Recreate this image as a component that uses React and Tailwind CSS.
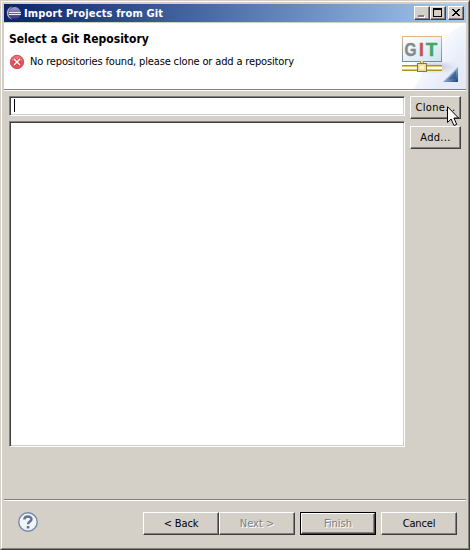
import React from "react";

const raised =
  "border border-t-white border-l-white border-r-[#404040] border-b-[#404040] shadow-[inset_-1px_-1px_0_#808080] bg-[#d4d0c8]";
const sunken =
  "border border-t-[#808080] border-l-[#808080] border-r-white border-b-white bg-white shadow-[inset_1px_1px_0_#404040,inset_-1px_-1px_0_#d4d0c8]";

function EclipseIcon() {
  return (
    <svg width="16" height="16" viewBox="0 0 16 16" className="shrink-0">
      <defs>
        <linearGradient id="orb" x1="0" y1="0" x2="0" y2="1">
          <stop offset="0" stopColor="#a9a4cf" />
          <stop offset=".45" stopColor="#6e68a6" />
          <stop offset="1" stopColor="#39366f" />
        </linearGradient>
      </defs>
      <path d="M6.500 1.500C3 2 .8 5 .8 8s2.200 6 5.700 6.500C3.500 12.500 2.500 10 2.500 8s1-4.500 4-6.500Z" fill="#b8a6b8" />
      <circle cx="8.700" cy="8" r="6" fill="url(#orb)" />
      <path d="M3 7.500h12M3 9.500h12" stroke="#e9e8f6" strokeWidth="1" />
    </svg>
  );
}

function ErrorIcon() {
  return (
    <svg width="16" height="16" viewBox="0 0 16 16" className="shrink-0">
      <circle cx="8" cy="8" r="6.700" fill="#e4505a" stroke="#d0525c" />
      <path d="M2.500 7C3 3 6 2 8 2s5 1 5.500 5Z" fill="#ef8287" opacity=".7" />
      <path d="M5 5l6 6M11 5l-6 6" stroke="#c23c48" strokeWidth="3" />
      <path d="M5 5l6 6M11 5l-6 6" stroke="#fff" strokeWidth="1.500" />
    </svg>
  );
}

function GitBanner() {
  return (
    <svg width="76" height="66" viewBox="390 23 76 66" className="shrink-0">
      <defs>
        <linearGradient id="sky" x1="0" y1="0" x2="1" y2="1">
          <stop offset="0.250" stopColor="#fff" />
          <stop offset="1" stopColor="#d8e1f6" />
        </linearGradient>
        <linearGradient id="frame" x1="0" y1="0" x2="0" y2="1">
          <stop offset="0" stopColor="#dfb783" />
          <stop offset="1" stopColor="#6d8cac" />
        </linearGradient>
        <linearGradient id="panel" x1="0" y1="0" x2="1" y2="1">
          <stop offset="0" stopColor="#fff" />
          <stop offset="1" stopColor="#cfe4ef" />
        </linearGradient>
        <linearGradient id="fold" x1="0" y1="0" x2="1" y2="1">
          <stop offset=".25" stopColor="#c5dcf2" />
          <stop offset="1" stopColor="#17417f" />
        </linearGradient>
        <radialGradient id="shade">
          <stop offset="0" stopColor="#a99fab" stopOpacity=".75" />
          <stop offset="1" stopColor="#c8c5d5" stopOpacity="0" />
        </radialGradient>
      </defs>
      <path d="M466 24C453 29 443 37 434 50L414 89H466Z" fill="url(#sky)" />
      <path d="M466 52C452 58 440 70 434 89H466Z" fill="#e7edf9" opacity=".6" />
      <ellipse cx="433" cy="67" rx="26" ry="7" fill="url(#shade)" />
      <rect x="402.500" y="36.500" width="39" height="25" fill="url(#panel)" stroke="url(#frame)" />
      <g fontFamily="Liberation Sans, sans-serif" fontWeight="700" fontSize="17.500" strokeWidth=".4">
        <text x="404.500" y="55.500" fill="#85888c" stroke="#85888c" textLength="12" lengthAdjust="spacingAndGlyphs">G</text>
        <text x="419" y="55.500" fill="#c84d50" stroke="#c84d50">I</text>
        <text x="425.700" y="55.500" fill="#43a567" stroke="#43a567" textLength="11.500" lengthAdjust="spacingAndGlyphs">T</text>
      </g>
      <path d="M402 65.500h40M402 70.500h40" stroke="#a69427" />
      <path d="M402 66.500h40M402 69.500h40" stroke="#d9cc68" />
      <path d="M402 68h40" stroke="#fffce1" strokeWidth="2" />
      <path d="M420.500 61v3M423.500 61v3" stroke="#a69427" />
      <path d="M422 61v3" stroke="#e7dc86" strokeWidth="2" />
      <rect x="417.500" y="63.500" width="9" height="8" fill="#f7edbb" stroke="#8c7632" />
      <rect x="419" y="65" width="6" height="5" fill="#fff8d8" stroke="#e7cf79" />
      <path d="M443 82L458 67V82Z" fill="url(#fold)" />
      <path d="M448 79.500l8-8.500v8Z" fill="#2c5592" opacity=".65" />
    </svg>
  );
}

function HelpIcon() {
  return (
    <svg width="20" height="20" viewBox="0 0 20 20" className="shrink-0">
      <circle cx="10" cy="10" r="9.200" fill="#f2f4f7" stroke="#7489aa" strokeWidth="1.400" />
      <path d="M6.300 7.500C6.500 3.500 13.500 3.600 13.500 7.200C13.500 9.500 10 9.500 10 12.300" stroke="#627494" strokeWidth="2.400" fill="none" />
      <rect x="8.700" y="14" width="2.700" height="2.500" fill="#627494" />
    </svg>
  );
}

function CaptionButton({ children, className = "" }) {
  return (
    <button className={`h-[14px] w-4 shrink-0 ${raised} ${className}`}>
      <svg width="14" height="12" viewBox="0 0 14 12" shapeRendering="crispEdges">
        {children}
      </svg>
    </button>
  );
}

function Button({ children, className = "", height = "h-[23px]", disabled }) {
  return (
    <button
      disabled={disabled}
      className={`flex ${height} shrink-0 items-center justify-center whitespace-nowrap pb-px ${raised} ${
        disabled ? "text-[#808080] [text-shadow:1px_1px_0_#fff]" : "text-black"
      } ${className}`}
    >
      {children}
    </button>
  );
}

export default function App() {
  return (
    <div className="relative h-[550px] w-[470px] overflow-hidden border border-t-[#d4d0c8] border-l-[#d4d0c8] border-r-[#404040] border-b-[#404040] bg-[#d4d0c8] font-['DejaVu_Sans_Condensed','DejaVu_Sans',sans-serif] text-[11px] leading-[13px] text-black [font-stretch:condensed]">
      <div className="flex h-full flex-col border border-t-white border-l-white border-r-[#808080] border-b-[#808080] p-0.5 pb-0">
        <div className="flex h-[18px] shrink-0 items-center bg-linear-to-r from-[#0a246a] to-[#a6caf0] pr-0.5 pl-0.5">
          <EclipseIcon />
          <span className="ml-0.5 whitespace-nowrap font-bold tracking-[0.14px] text-white">Import Projects from Git</span>
          <div className="ml-auto flex">
            <CaptionButton>
              <path d="M4 9h6v2H4z" fill="#fff" />
              <path d="M3 8h6v2H3z" fill="#808080" />
            </CaptionButton>
            <CaptionButton>
              <path d="M2 1h9v9H2zM3 3v6h7V3z" fillRule="evenodd" fill="#000" />
            </CaptionButton>
            <CaptionButton className="ml-0.5">
              <path d="M3 2h2v1h1v1h2V3h1V2h2v1h-1v1H9v1H8v1h1v1h1v1h1v1H9V8H8V7H6v1H5v1H3V8h1V7h1V6h1V5H5V4H4V3H3z" fill="#000" />
            </CaptionButton>
          </div>
        </div>
        <header className="mt-px flex h-[68px] shrink-0 justify-between border-b border-white bg-white shadow-[inset_0_-1px_0_#808080]">
          <div className="pt-[9px] pl-[5px]">
            <h1 className="text-[12px] leading-[15px] font-bold whitespace-nowrap">Select a Git Repository</h1>
            <div className="mt-[7px] flex items-center">
              <ErrorIcon />
              <span className="mb-0.5 ml-[5px] whitespace-nowrap tracking-[-0.15px]">No repositories found, please clone or add a repository</span>
            </div>
          </div>
          <GitBanner />
        </header>
        <main className="flex h-[408px] shrink-0 gap-[5px] pt-[5px] pr-[5px] pl-[5px]">
          <div className="flex w-[396px] shrink-0 flex-col gap-[5px]">
            <div className={`h-5 shrink-0 ${sunken}`}>
              <div className="mt-[2px] ml-[4px] h-[13px] w-px bg-black" />
            </div>
            <div className={`h-[326px] shrink-0 ${sunken}`} />
          </div>
          <div className="flex w-[51px] flex-col gap-[7px]">
            <Button className="tracking-[0.3px]">Clone...</Button>
            <Button className="tracking-[0.3px]">Add...</Button>
          </div>
        </main>
        <footer className="flex grow items-start border-t border-[#808080] pt-3 pr-[9px] pl-[14px] shadow-[inset_0_1px_0_#fff]">
          <HelpIcon />
          <div className="ml-auto flex">
            <Button className="w-[76px] tracking-[-0.15px]">&lt; Back</Button>
            <Button className="w-[76px]" disabled>Next &gt;</Button>
            <div className="mx-[5px] flex h-[23px] w-[76px] border border-black">
              <Button className="w-[74px]" height="h-[21px]" disabled>Finish</Button>
            </div>
            <Button className="w-[76px] tracking-[-0.15px]">Cancel</Button>
          </div>
        </footer>
      </div>
      <svg className="absolute top-[105px] left-[446px]" width="13" height="21" viewBox="0 0 13 21">
        <path d="M.5.700V16.500L4.100 13L7 19.500L9.700 18.400L6.900 12H11.500Z" fill="#fff" stroke="#000" />
      </svg>
    </div>
  );
}
